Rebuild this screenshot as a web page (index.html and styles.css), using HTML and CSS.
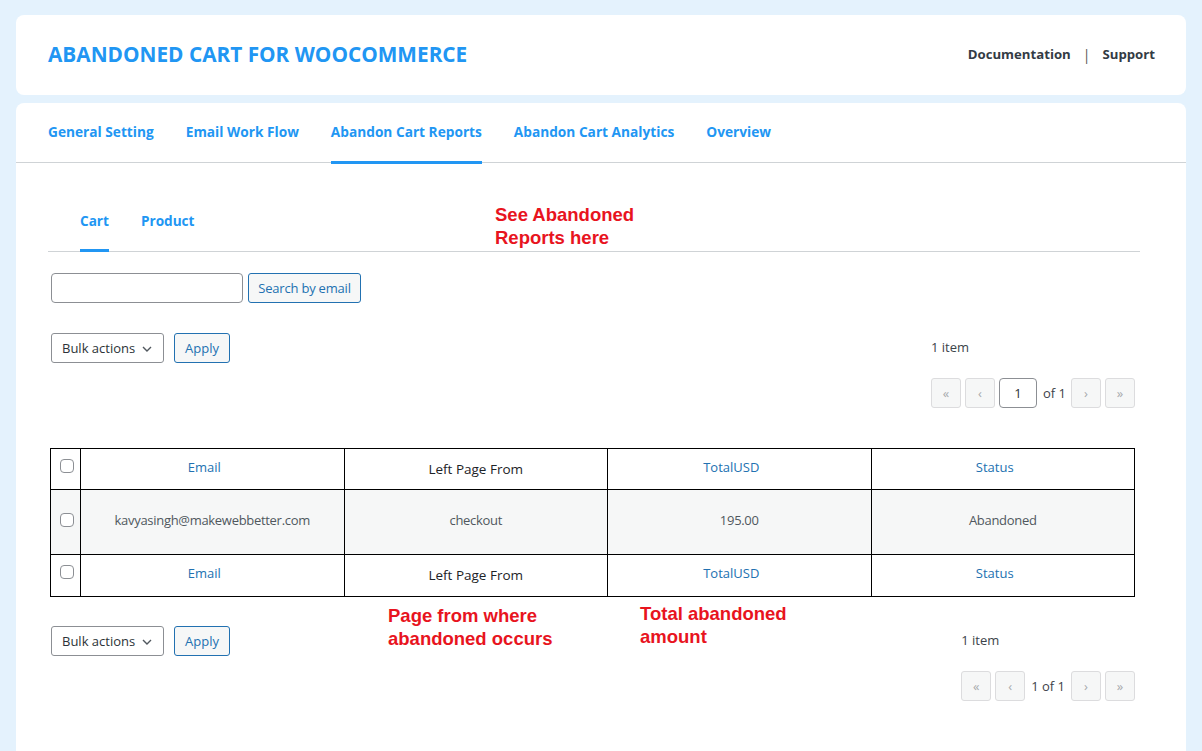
FILE: index.html
```html
<!DOCTYPE html>
<html lang="en">
<head>
<meta charset="utf-8">
<title>Abandoned Cart for WooCommerce</title>
<link rel="stylesheet" href="styles.css">
</head>
<body>
<div class="page">
  <header class="top-card">
    <h1 class="brand">ABANDONED CART FOR WOOCOMMERCE</h1>
    <nav class="top-links">
      <a href="#">Documentation</a>
      <span class="sep">|</span>
      <a href="#">Support</a>
    </nav>
  </header>

  <main class="main-card">
    <nav class="main-tabs">
      <a href="#" class="tab">General Setting</a>
      <a href="#" class="tab">Email Work Flow</a>
      <a href="#" class="tab active">Abandon Cart Reports</a>
      <a href="#" class="tab">Abandon Cart Analytics</a>
      <a href="#" class="tab">Overview</a>
    </nav>

    <section class="content">
      <nav class="sub-tabs">
        <a href="#" class="sub-tab active">Cart</a>
        <a href="#" class="sub-tab">Product</a>
      </nav>

      <div class="search-row">
        <input type="search" class="search-input" aria-label="Search">
        <button class="btn search-btn">Search by email</button>
      </div>

      <div class="tablenav top">
        <div class="bulk">
          <div class="select">Bulk actions
            <svg class="chev" width="10" height="6" viewBox="0 0 10 6"><path d="M1 1l4 4 4-4" fill="none" stroke="#50575e" stroke-width="1.4"/></svg>
          </div>
          <button class="btn apply">Apply</button>
        </div>
        <div class="pager">
          <div class="count">1 item</div>
          <div class="pages">
            <span class="pbtn first">«</span>
            <span class="pbtn">‹</span>
            <span class="cur-input">1</span>
            <span class="of">of 1</span>
            <span class="pbtn nxt">›</span>
            <span class="pbtn">»</span>
          </div>
        </div>
      </div>

      <table class="list">
        <colgroup><col class="c-check"><col><col><col><col></colgroup>
        <thead>
          <tr>
            <th class="check"><span class="cb"></span></th>
            <th><a href="#" class="sort">Email</a></th>
            <th class="plain">Left Page From</th>
            <th><a href="#" class="sort">TotalUSD</a></th>
            <th><a href="#" class="sort">Status</a></th>
          </tr>
        </thead>
        <tbody>
          <tr>
            <td class="check"><span class="cb"></span></td>
            <td>kavyasingh@makewebbetter.com</td>
            <td>checkout</td>
            <td>195.00</td>
            <td>Abandoned</td>
          </tr>
        </tbody>
        <tfoot>
          <tr>
            <th class="check"><span class="cb"></span></th>
            <th><a href="#" class="sort">Email</a></th>
            <th class="plain">Left Page From</th>
            <th><a href="#" class="sort">TotalUSD</a></th>
            <th><a href="#" class="sort">Status</a></th>
          </tr>
        </tfoot>
      </table>

      <div class="tablenav bottom">
        <div class="bulk">
          <div class="select">Bulk actions
            <svg class="chev" width="10" height="6" viewBox="0 0 10 6"><path d="M1 1l4 4 4-4" fill="none" stroke="#50575e" stroke-width="1.4"/></svg>
          </div>
          <button class="btn apply">Apply</button>
        </div>
        <div class="pager">
          <div class="count">1 item</div>
          <div class="pages">
            <span class="pbtn first">«</span>
            <span class="pbtn">‹</span>
            <span class="of plain-of">1 of 1</span>
            <span class="pbtn nxt">›</span>
            <span class="pbtn">»</span>
          </div>
        </div>
      </div>
    </section>

    <div class="note note-1">See Abandoned<br>Reports here</div>
    <div class="note note-2">Page from where<br>abandoned occurs</div>
    <div class="note note-3">Total abandoned<br>amount</div>
  </main>
</div>
</body>
</html>
```

FILE: styles.css
```css
* { box-sizing: border-box; }
html, body { margin: 0; padding: 0; }
body {
  background: #e4f2fd;
  font-family: "Open Sans", "Noto Sans", sans-serif;
  color: #3c434a;
  height: 751px;
  overflow: hidden;
}
a { text-decoration: none; }

.page { padding: 15px 16px 0 16px; }

.top-card {
  background: #fff;
  border-radius: 8px;
  height: 80px;
  display: flex;
  align-items: center;
  justify-content: space-between;
  padding: 0 31px 2px 32px;
}
.brand {
  margin: 0;
  font-size: 20.8px;
  font-weight: 700;
  color: #2196f3;
}
.top-links {
  display: flex;
  align-items: center;
  gap: 12px;
  font-size: 13.2px;
  font-weight: 700;
}
.top-links a { color: #333b44; }
.top-links .sep { color: #555; font-weight: 400; font-size: 14px; }

.main-card {
  position: relative;
  margin-top: 8px;
  background: #fff;
  border-radius: 8px 8px 0 0;
  height: 660px;
}

.main-tabs {
  display: flex;
  gap: 32px;
  padding: 0 32px;
  height: 60px;
  border-bottom: 1px solid #cfd3d6;
}
.tab {
  display: block;
  color: #2196f3;
  font-size: 13.7px;
  font-weight: 700;
  line-height: 20px;
  padding-top: 19px;
  height: 60px;
  border-bottom: 3px solid transparent;
  margin-bottom: -1px;
}
.tab.active { border-bottom-color: #2196f3; height: 61px; }

.content { padding: 0 51px 0 34px; }

.sub-tabs {
  display: flex;
  gap: 32px;
  margin: 40px -5px 0 -2px;
  padding-left: 32px;
  border-bottom: 1px solid #cfd3d6;
}
.sub-tab {
  display: block;
  color: #2196f3;
  font-size: 13.6px;
  font-weight: 700;
  line-height: 20px;
  padding: 8px 0 18px;
  border-bottom: 3px solid transparent;
  margin-bottom: -1px;
}
.sub-tab.active { border-bottom-color: #2196f3; }

.search-row {
  display: flex;
  gap: 5px;
  margin-top: 21px;
  padding-left: 1px;
}
.search-input {
  width: 192px;
  height: 30px;
  border: 1px solid #8c8f94;
  border-radius: 4px;
  background: #fff;
  padding: 0 8px;
  font: inherit;
}
.btn {
  height: 30px;
  border: 1px solid #2271b1;
  border-radius: 3px;
  background: #f6f7f7;
  color: #2271b1;
  font-family: inherit;
  font-size: 13px;
  padding: 0 10px;
  line-height: 28px;
}
.search-btn { width: 113px; padding: 0; letter-spacing: -0.2px; }

.tablenav {
  display: flex;
  justify-content: space-between;
  align-items: flex-start;
}
.tablenav.top { margin-top: 30px; }
.tablenav.bottom { margin-top: 29px; }
.bulk { display: flex; gap: 10px; padding-left: 1px; }
.select {
  width: 113px;
  height: 30px;
  border: 1px solid #8c8f94;
  border-radius: 3px;
  font-size: 13px;
  color: #2c3338;
  line-height: 28px;
  padding: 0 0 0 10px;
  display: flex;
  align-items: center;
  gap: 7px;
}
.chev { margin-top: 1px; }
.btn.apply { width: 56px; padding: 0; }

.pager { display: flex; flex-direction: column; align-items: flex-start; }
.count { font-size: 13px; line-height: 28px; color: #3c434a; }
.pages {
  display: flex;
  align-items: center;
}
.pbtn {
  width: 30px;
  height: 30px;
  border: 1px solid #dcdcde;
  border-radius: 3px;
  background: #f6f7f7;
  color: #a7aaad;
  font-size: 13px;
  display: flex;
  align-items: center;
  justify-content: center;
  margin-left: 4px;
}
.pbtn.first { margin-left: 0; }
.cur-input {
  width: 38px;
  height: 30px;
  border: 1px solid #8c8f94;
  border-radius: 4px;
  display: flex;
  align-items: center;
  justify-content: center;
  font-size: 13px;
  color: #2c3338;
  margin-left: 4px;
}
.of { font-size: 13px; margin: 0 5px 0 6px; color: #3c434a; }
.plain-of { margin: 0 6px; }
.pbtn.nxt { margin-left: 0; }

.tablenav.top .pages { margin-top: 17px; }
.tablenav.bottom .pages { margin-top: 17px; }

.list {
  width: 100%;
  margin-top: 40px;
  border-collapse: collapse;
  table-layout: fixed;
  font-size: 13px;
  border: 1px solid #000;
}
.c-check { width: 30px; }
.list th, .list td {
  border: 1px solid #000;
  text-align: center;
  font-weight: 400;
  line-height: 20px;
  vertical-align: top;
}
.list thead th, .list tfoot th { padding: 8px 10px 12px; }
.list tfoot th { padding-bottom: 13px; }
.list th.plain { color: #1d2327; padding-top: 10px; padding-bottom: 10px; font-size: 13.5px; }
.list tfoot th.plain { padding-bottom: 11px; }
.list tbody td {
  background: #f6f7f7;
  color: #50575e;
  padding: 20px 10px 24px;
  letter-spacing: -0.3px;
}
.list .check { padding: 10px 0 0 !important; }
.list tbody .check { padding-top: 23px !important; }
.sort { color: #2271b1; display: block; padding-right: 16px; }
.cb {
  display: block;
  width: 14px;
  height: 14px;
  margin: 0 auto 0 9px;
  border: 1px solid #8c8f94;
  border-radius: 4px;
  background: #fff;
}

.note {
  position: absolute;
  font-family: "Liberation Sans", Arial, sans-serif;
  font-weight: 700;
  font-size: 18.5px;
  line-height: 23px;
  color: #e8141e;
}
.note-1 { left: 479px; top: 100px; }
.note-2 { left: 372px; top: 501px; }
.note-3 { left: 624px; top: 499px; }
```
